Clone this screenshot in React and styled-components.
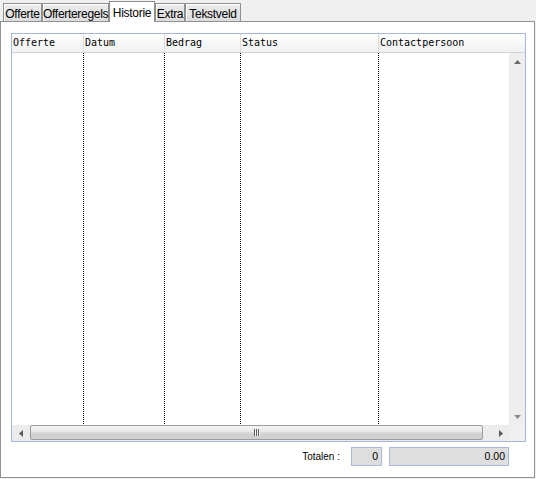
import React from 'react';
import styled, { createGlobalStyle } from 'styled-components';

const Global = createGlobalStyle`
  html, body { margin: 0; padding: 0; background: #f0f0f0; }
  body { width: 536px; height: 479px; overflow: hidden; }
`;

const Window = styled.div`
  width: 536px;
  height: 479px;
  background: #f0f0f0;
  display: flex;
  flex-direction: column;
  font-family: "Liberation Sans", Arial, sans-serif;
`;

const TabStrip = styled.div`
  height: 21px;
  display: flex;
  align-items: flex-end;
  padding-left: 3px;
  position: relative;
  z-index: 1;
`;

const Tab = styled.div`
  box-sizing: border-box;
  width: ${(p) => p.$w}px;
  height: ${(p) => (p.$active ? 21 : 18)}px;
  margin-bottom: ${(p) => (p.$active ? -1 : 0)}px;
  border: 1px solid #8e8f8f;
  border-bottom: none;
  background: ${(p) => (p.$active ? '#ffffff' : 'linear-gradient(#ececec, #dcdcdc)')};
  box-shadow: ${(p) => (p.$active ? 'none' : 'inset 1px 1px 0 #ffffff')};
  padding-top: ${(p) => (p.$active ? 4 : 3)}px;
  font-size: 12px;
  line-height: 14px;
  letter-spacing: -0.3px;
  color: #000;
  text-align: center;
  white-space: nowrap;
`;

const Panel = styled.div`
  box-sizing: border-box;
  width: 535px;
  height: 457px;
  background: #ffffff;
  border: 1px solid #919191;
  padding: 11px 8px 0 10px;
  display: flex;
  flex-direction: column;
`;

const Grid = styled.div`
  box-sizing: border-box;
  height: 409px;
  border: 1px solid #a6b7de;
  display: flex;
  flex-direction: column;
  background: #ffffff;
`;

const HeaderRow = styled.div`
  display: flex;
  height: 18px;
  border-bottom: 1px solid #d3d3d3;
  background: linear-gradient(#ffffff, #f0f1f3);
`;

const HeaderCell = styled.div`
  box-sizing: border-box;
  width: ${(p) => (p.$w ? `${p.$w}px` : 'auto')};
  flex: ${(p) => (p.$w ? 'none' : '1')};
  border-right: ${(p) => (p.$last ? 'none' : '1px solid #dadada')};
  padding-left: 1px;
  font-family: "DejaVu Sans Mono", "Liberation Mono", monospace;
  font-size: 10px;
  line-height: 18px;
  color: #000;
  white-space: nowrap;
  overflow: hidden;
`;

const Body = styled.div`
  display: flex;
  height: 372px;
`;

const Columns = styled.div`
  flex: 1;
  display: flex;
`;

const BodyCol = styled.div`
  box-sizing: border-box;
  width: ${(p) => (p.$w ? `${p.$w}px` : 'auto')};
  flex: ${(p) => (p.$w ? 'none' : '1')};
  height: 371px;
  border-right: ${(p) => (p.$last ? 'none' : '1px dotted #000')};
`;

const VScroll = styled.div`
  width: 16px;
  background: #eeeeee;
  display: flex;
  flex-direction: column;
  justify-content: space-between;
`;

const VButton = styled.div`
  height: 17px;
  display: flex;
  align-items: center;
  justify-content: center;
`;

const HScroll = styled.div`
  display: flex;
  height: 16px;
  background: #ececec;
`;

const HButton = styled.div`
  width: 17px;
  display: flex;
  align-items: center;
  justify-content: center;
`;

const Track = styled.div`
  flex: 1;
  display: flex;
  padding: 0 9px 1px 1px;
`;

const Thumb = styled.div`
  box-sizing: border-box;
  flex: 1;
  border: 1px solid #9c9c9c;
  border-radius: 2px;
  background: linear-gradient(#f6f6f6 0%, #e6e6e6 45%, #d2d2d2 55%, #cfcfcf 100%);
  display: flex;
  align-items: center;
  justify-content: center;
`;

const Grip = styled.div`
  display: flex;
  gap: 1px;
`;

const GripLine = styled.div`
  width: 1px;
  height: 7px;
  background: #5e5e5e;
  box-shadow: 1px 0 0 #f4f4f4;
  margin-right: 0;
`;

const Corner = styled.div`
  width: 16px;
  background: #f0f0f0;
`;

const TotalsRow = styled.div`
  display: flex;
  justify-content: flex-end;
  align-items: center;
  margin-top: 5px;
  padding-right: 17px;
`;

const TotalsLabel = styled.div`
  font-size: 10px;
  color: #000;
  margin-right: 11px;
  white-space: pre;
`;

const TotalBox = styled.div`
  box-sizing: border-box;
  width: ${(p) => p.$w}px;
  height: 19px;
  margin-left: ${(p) => p.$gap || 0}px;
  border: 1px solid #a8badf;
  background: #dedede;
  font-size: 10.5px;
  line-height: 17px;
  text-align: right;
  padding-right: 3px;
  color: #000;
`;

const ArrowUp = () => (
  <svg width="7" height="4" viewBox="0 0 7 4">
    <polygon points="3.5,0 7,4 0,4" fill="#6a6a6a" />
  </svg>
);
const ArrowDown = () => (
  <svg width="7" height="4" viewBox="0 0 7 4">
    <polygon points="0,0 7,0 3.5,4" fill="#8a8a8a" />
  </svg>
);
const ArrowLeft = () => (
  <svg width="4" height="7" viewBox="0 0 4 7">
    <polygon points="4,0 4,7 0,3.5" fill="#5a5a5a" />
  </svg>
);
const ArrowRight = () => (
  <svg width="4" height="7" viewBox="0 0 4 7">
    <polygon points="0,0 4,3.5 0,7" fill="#5a5a5a" />
  </svg>
);

const tabs = [
  { label: 'Offerte', w: 39 },
  { label: 'Offerteregels', w: 67 },
  { label: 'Historie', w: 46, active: true },
  { label: 'Extra', w: 30 },
  { label: 'Tekstveld', w: 56 },
];

const columns = [
  { label: 'Offerte', w: 72 },
  { label: 'Datum', w: 81 },
  { label: 'Bedrag', w: 76 },
  { label: 'Status', w: 138 },
  { label: 'Contactpersoon' },
];

export default function App() {
  return (
    <>
      <Global />
      <Window>
        <TabStrip>
          {tabs.map((t) => (
            <Tab key={t.label} $w={t.w} $active={t.active}>
              {t.label}
            </Tab>
          ))}
        </TabStrip>
        <Panel>
          <Grid>
            <HeaderRow>
              {columns.map((c, i) => (
                <HeaderCell key={c.label} $w={c.w} $last={i === columns.length - 1}>
                  {c.label}
                </HeaderCell>
              ))}
            </HeaderRow>
            <Body>
              <Columns>
                {columns.map((c, i) => (
                  <BodyCol key={c.label} $w={c.w} $last={i === columns.length - 1} />
                ))}
              </Columns>
              <VScroll>
                <VButton><ArrowUp /></VButton>
                <VButton><ArrowDown /></VButton>
              </VScroll>
            </Body>
            <HScroll>
              <HButton><ArrowLeft /></HButton>
              <Track>
                <Thumb>
                  <Grip>
                    <GripLine />
                    <GripLine />
                    <GripLine />
                  </Grip>
                </Thumb>
              </Track>
              <HButton><ArrowRight /></HButton>
              <Corner />
            </HScroll>
          </Grid>
          <TotalsRow>
            <TotalsLabel>Totalen :</TotalsLabel>
            <TotalBox $w={31}>0</TotalBox>
            <TotalBox $w={120} $gap={7}>0.00</TotalBox>
          </TotalsRow>
        </Panel>
      </Window>
    </>
  );
}
